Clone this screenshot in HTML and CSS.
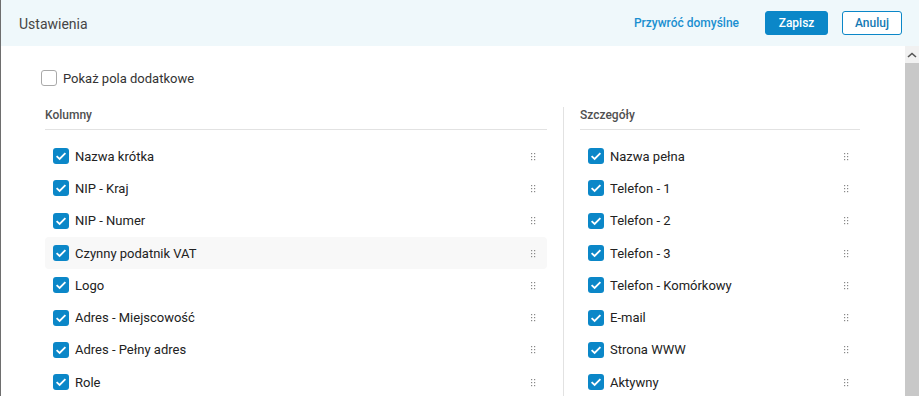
FILE: index.html
```html
<html>
    <head>
        <link rel="stylesheet" href="styles.css">
    </head>
    <body>
        <div class="screen">
            <div class="backdrop-edge"></div>
            <section class="settings">
                <header class="settings-head">
                    <h1>Ustawienia</h1>
                    <div class="actions">
                        <button type="button" class="link-btn">Przywróć domyślne</button>
                        <button type="button" class="btn primary">Zapisz</button>
                        <button type="button" class="btn outline">Anuluj</button>
                    </div>
                </header>
                <div class="settings-body">
                    <div class="content">
                        <label class="extra">
                            <span class="box"></span>
                            Pokaż pola dodatkowe
                        </label>
                        <div class="columns">
                            <div class="group">
                                <h2>Kolumny</h2>
                                <ul class="fields">
                                    <li><span class="box on"></span>Nazwa krótka<i class="grip"></i></li>
                                    <li><span class="box on"></span>NIP - Kraj<i class="grip"></i></li>
                                    <li><span class="box on"></span>NIP - Numer<i class="grip"></i></li>
                                    <li class="hover"><span class="box on"></span>Czynny podatnik VAT<i class="grip"></i></li>
                                    <li><span class="box on"></span>Logo<i class="grip"></i></li>
                                    <li><span class="box on"></span>Adres - Miejscowość<i class="grip"></i></li>
                                    <li><span class="box on"></span>Adres - Pełny adres<i class="grip"></i></li>
                                    <li><span class="box on"></span>Role<i class="grip"></i></li>
                                </ul>
                            </div>
                            <div class="group details">
                                <h2>Szczegóły</h2>
                                <ul class="fields">
                                    <li><span class="box on"></span>Nazwa pełna<i class="grip"></i></li>
                                    <li><span class="box on"></span>Telefon - 1<i class="grip"></i></li>
                                    <li><span class="box on"></span>Telefon - 2<i class="grip"></i></li>
                                    <li><span class="box on"></span>Telefon - 3<i class="grip"></i></li>
                                    <li><span class="box on"></span>Telefon - Komórkowy<i class="grip"></i></li>
                                    <li><span class="box on"></span>E-mail<i class="grip"></i></li>
                                    <li><span class="box on"></span>Strona WWW<i class="grip"></i></li>
                                    <li><span class="box on"></span>Aktywny<i class="grip"></i></li>
                                </ul>
                            </div>
                        </div>
                    </div>
                    <div class="scrollbar">
                        <div class="arrow">
                            <svg width="10" height="6" viewBox="0 0 10 6"><path d="M1 5 L5 1.5 L9 5" fill="none" stroke="#555" stroke-width="1.6"/></svg>
                        </div>
                        <div class="thumb"></div>
                    </div>
                </div>
            </section>
        </div>
    </body>
</html>
```

FILE: styles.css
```css
* { box-sizing: border-box; }

body {
    margin: 0;
    font-family: Roboto, "Liberation Sans", sans-serif;
    background: #fff;
    overflow: hidden;
}

.screen {
    display: flex;
    height: 396px;
}

.backdrop-edge {
    width: 1px;
    background: #6e6e6e;
}

.settings {
    flex: 1;
    display: flex;
    flex-direction: column;
    min-width: 0;
}

.settings-head {
    height: 46px;
    background: #eff8fb;
    display: flex;
    align-items: center;
    justify-content: space-between;
    padding: 0 17px 0 18px;
    h1 {
        margin: 0;
        font-size: 14px;
        font-weight: 400;
        color: #454545;
        padding-top: 1px;
    }
}

.actions {
    display: flex;
    align-items: center;
    gap: 14px;
    padding-bottom: 1px;
}

.link-btn {
    all: unset;
    color: #1a8fd0;
    font-size: 12px;
    font-weight: 500;
    margin-right: 12px;
    cursor: pointer;
}

.btn {
    font-family: inherit;
    font-size: 12px;
    font-weight: 500;
    height: 24px;
    border-radius: 3px;
    border: 1px solid #0b87c8;
    cursor: pointer;
    &.primary {
        background: #0b87c8;
        color: #fff;
        width: 63px;
    }
    &.outline {
        background: #fff;
        color: #1379b4;
        width: 60px;
    }
}

.settings-body {
    flex: 1;
    display: flex;
    min-height: 0;
}

.content {
    flex: 1;
    padding: 24px 0 0 40px;
}

.extra {
    display: flex;
    align-items: center;
    gap: 6px;
    font-size: 13px;
    color: #333;
    height: 16px;
    .box {
        border: 1px solid #a9a9a9;
        background: #fff;
    }
}

.box {
    width: 16px;
    height: 16px;
    border-radius: 3px;
    flex: none;
    &.on {
        background: #0b87c8 url("data:image/svg+xml,%3Csvg xmlns='http://www.w3.org/2000/svg' viewBox='0 0 16 16'%3E%3Cpath d='M3.6 8.2 L6.6 11 L12.4 5.2' fill='none' stroke='white' stroke-width='1.8'/%3E%3C/svg%3E") center / 16px 16px no-repeat;
    }
}

.columns {
    display: grid;
    grid-template-columns: 518px 297px;
    margin: 19px 0 0 4px;
}

.group {
    padding-right: 16px;
    h2 {
        margin: 0;
        font-size: 12px;
        font-weight: 500;
        color: #505050;
        height: 25px;
        line-height: 20px;
        border-bottom: 1px solid #e2e2e2;
    }
    &.details {
        border-left: 1px solid #e2e2e2;
        padding: 0 0 0 16px;
        margin-top: 2px;
        h2 { margin-top: -2px; }
        .fields li { padding-left: 8px; }
    }
}

.fields {
    list-style: none;
    margin: 10px 0 0;
    padding: 0;
    li {
        display: flex;
        align-items: center;
        gap: 6px;
        height: 32.3px;
        padding: 0 10px 0 8px;
        font-size: 13px;
        color: #222;
        border-radius: 4px;
        &.hover { background: #f8f8f8; }
    }
}

.grip {
    margin-left: auto;
    margin-right: 1px;
    width: 6px;
    height: 9px;
    background: url("data:image/svg+xml,%3Csvg xmlns='http://www.w3.org/2000/svg' viewBox='0 0 6 9'%3E%3Cg fill='%23888'%3E%3Crect x='1' y='1' width='1.2' height='1.2'/%3E%3Crect x='4' y='1' width='1.2' height='1.2'/%3E%3Crect x='1' y='4' width='1.2' height='1.2'/%3E%3Crect x='4' y='4' width='1.2' height='1.2'/%3E%3Crect x='1' y='7' width='1.2' height='1.2'/%3E%3Crect x='4' y='7' width='1.2' height='1.2'/%3E%3C/g%3E%3C/svg%3E") 0 0 / 6px 9px no-repeat;
}

.scrollbar {
    width: 14px;
    display: flex;
    flex-direction: column;
    .arrow {
        height: 17px;
        background: #f1f1f1;
        display: grid;
        place-items: center;
    }
    .thumb {
        flex: 1;
        background: #c8c8c8;
    }
}
```
